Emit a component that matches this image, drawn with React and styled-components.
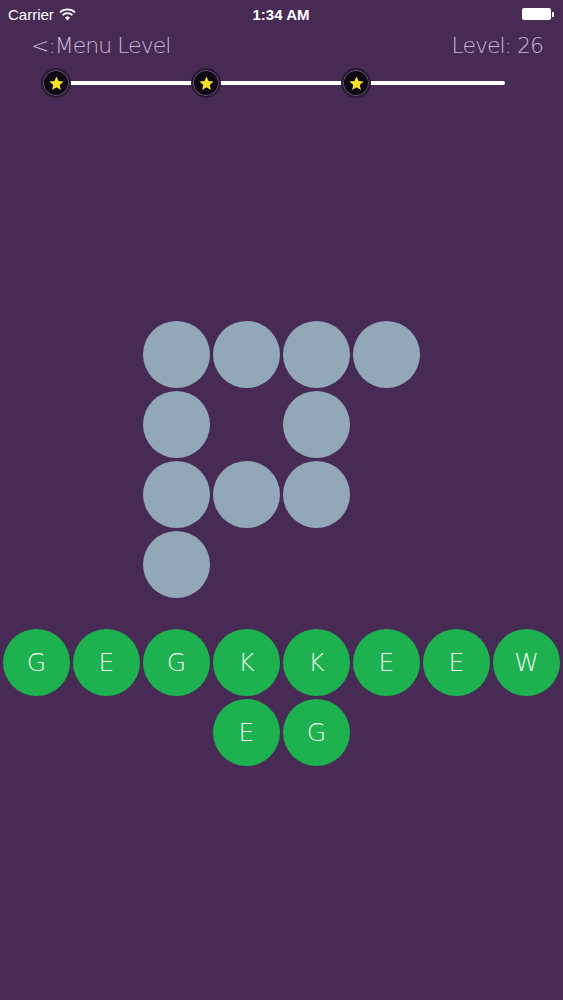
import React from "react";
import styled, { createGlobalStyle } from "styled-components";

const GlobalStyle = createGlobalStyle`
  html, body {
    margin: 0;
    padding: 0;
    background: #472b55;
  }
  * { box-sizing: border-box; }
`;

const pattern = [
  [1, 1, 1, 1],
  [1, 0, 1, 0],
  [1, 1, 1, 0],
  [1, 0, 0, 0],
];

const letters = ["G", "E", "G", "K", "K", "E", "E", "W", "E", "G"];

const Star = () => (
  <svg width="17" height="17" viewBox="0 0 24 24">
    <polygon
      points="12,2 14.9,8.6 22,9.3 16.6,14 18.2,21 12,17.3 5.8,21 7.4,14 2,9.3 9.1,8.6"
      fill="#f7e22a"
    />
  </svg>
);

const Wifi = () => (
  <svg width="17" height="13" viewBox="0 0 17 13">
    <path d="M8.5 12.5 L6 9.6 A3.6 3.6 0 0 1 11 9.6 Z" fill="#fff" />
    <path d="M3.6 7.2 A7 7 0 0 1 13.4 7.2" stroke="#fff" strokeWidth="1.8" fill="none" />
    <path d="M1 4.4 A10.8 10.8 0 0 1 16 4.4" stroke="#fff" strokeWidth="1.8" fill="none" />
  </svg>
);

const App = () => {
  return (
    <Screen>
      <GlobalStyle />
      <StatusBar>
        <Carrier>
          Carrier <Wifi />
        </Carrier>
        <Time>1:34 AM</Time>
        <Battery>
          <BatteryBody />
          <BatteryNub />
        </Battery>
      </StatusBar>
      <Header>
        <HeaderText>&lt;:Menu Level</HeaderText>
        <HeaderText>Level: 26</HeaderText>
      </Header>
      <Progress>
        <Track />
        {[0, 1, 2].map((i) => (
          <StarBadge key={i} $left={i * 150}>
            <Star />
          </StarBadge>
        ))}
      </Progress>
      <Board>
        {pattern.flat().map((on, i) => (
          <Dot key={i} $on={on} />
        ))}
      </Board>
      <Tiles>
        {letters.map((l, i) => (
          <Tile key={i}>{l}</Tile>
        ))}
      </Tiles>
    </Screen>
  );
};

const Screen = styled.div`
  width: 563px;
  height: 1000px;
  background: #472b55;
  display: flex;
  flex-direction: column;
  overflow: hidden;
`;

const StatusBar = styled.div`
  height: 28px;
  display: grid;
  grid-template-columns: 1fr auto 1fr;
  align-items: center;
  padding: 0 9px 0 8px;
  color: #fff;
  font-family: "Liberation Sans", Arial, sans-serif;
  font-size: 15px;
`;

const Carrier = styled.div`
  display: flex;
  align-items: center;
  gap: 5px;
`;

const Time = styled.div`
  font-weight: 700;
  font-size: 15px;
`;

const Battery = styled.div`
  justify-self: end;
  display: flex;
  align-items: center;
`;

const BatteryBody = styled.div`
  width: 29px;
  height: 12px;
  background: #fff;
  border-radius: 2px;
`;

const BatteryNub = styled.div`
  width: 2px;
  height: 5px;
  background: #fff;
  border-radius: 0 1px 1px 0;
  margin-left: 1px;
`;

const Header = styled.div`
  display: flex;
  justify-content: space-between;
  align-items: center;
  padding: 0 20px 0 31px;
  height: 34px;
`;

const HeaderText = styled.span`
  font-family: "DejaVu Sans", sans-serif;
  font-weight: 200;
  font-size: 22px;
  letter-spacing: -1px;
  color: #cbb6d8;
`;

const Progress = styled.div`
  position: relative;
  margin: 6px 0 0 56px;
  width: 449px;
  height: 30px;
`;

const Track = styled.div`
  position: absolute;
  left: 0;
  right: 0;
  top: 13px;
  height: 4px;
  border-radius: 2px;
  background: #fff;
`;

const StarBadge = styled.div`
  position: absolute;
  top: 0;
  left: ${(p) => p.$left - 15}px;
  width: 30px;
  height: 30px;
  border-radius: 50%;
  background: #0f0913;
  border: 2px solid #2a1a33;
  box-shadow: 0 0 0 1px #6a5578 inset;
  display: flex;
  align-items: center;
  justify-content: center;
`;

const Board = styled.div`
  margin: 223px auto 0;
  display: grid;
  grid-template-columns: repeat(4, 67px);
  grid-auto-rows: 67px;
  gap: 3px;
`;

const Dot = styled.div`
  border-radius: 50%;
  background: ${(p) => (p.$on ? "#92a8b9" : "transparent")};
`;

const Tiles = styled.div`
  margin-top: 31px;
  padding: 0 3px;
  display: flex;
  flex-wrap: wrap;
  justify-content: center;
  gap: 3px;
`;

const Tile = styled.div`
  width: 67px;
  height: 67px;
  border-radius: 50%;
  background: #1db14f;
  color: #eef8ee;
  display: flex;
  align-items: center;
  justify-content: center;
  font-family: "DejaVu Sans", sans-serif;
  font-weight: 200;
  font-size: 25px;
`;

export default App;
